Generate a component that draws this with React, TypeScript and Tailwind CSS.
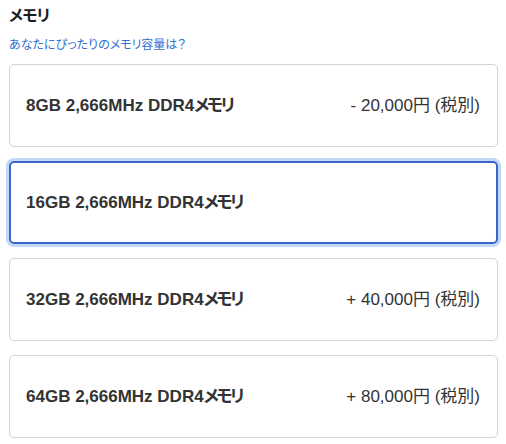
import React from "react";

const options = [
  { size: "8GB", price: "- 20,000円 (税別)", selected: false },
  { size: "16GB", price: "", selected: true },
  { size: "32GB", price: "+ 40,000円 (税別)", selected: false },
  { size: "64GB", price: "+ 80,000円 (税別)", selected: false },
];

export default function App() {
  return (
    <div
      className="w-[506px] h-[444px] bg-white text-[#1d1d1f] overflow-hidden [font-feature-settings:'palt']"
      style={{ fontFamily: '"Liberation Sans", "Noto Sans CJK JP", sans-serif' }}
    >
      <div className="pl-[9px] pr-[8px] pt-[5px]">
        <h2 className="text-[16px] leading-[22px] font-bold text-[#1d1d1f] tracking-[-1px]">メモリ</h2>
        <a className="block mt-[10px] text-[12px] leading-[16px] text-[#2f6fd4]">
          あなたにぴったりのメモリ容量は？
        </a>
        <div className="mt-[11px] flex flex-col gap-[14px]">
          {options.map((o) => (
            <div
              key={o.size}
              className={
                o.selected
                  ? "h-[83px] rounded-[5px] border-2 border-[#3a66c9] ring-[3px] ring-[#c3d8f7] flex items-center justify-between pl-[15px] pr-[16px]"
                  : "h-[83px] rounded-[5px] border border-[#d2d2d7] flex items-center justify-between pl-[16px] pr-[17px]"
              }
            >
              <span className="text-[17px] font-semibold text-[#333333]">
                {o.size} 2,666MHz DDR4<span className="tracking-[-2.5px]">メモリ</span>
              </span>
              <span className="text-[17px] text-[#333333]">{o.price}</span>
            </div>
          ))}
        </div>
      </div>
    </div>
  );
}
